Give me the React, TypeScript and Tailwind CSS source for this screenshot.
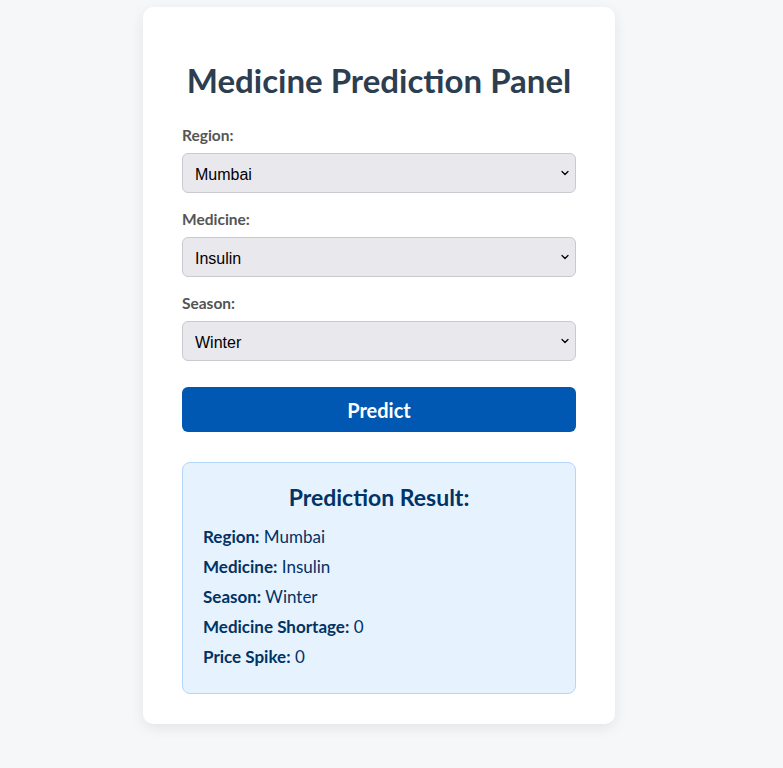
import { ChevronDown } from "lucide-react";

const fields = [
  { label: "Region:", value: "Mumbai", options: ["Mumbai", "Delhi", "Chennai", "Kolkata"] },
  { label: "Medicine:", value: "Insulin", options: ["Insulin", "Paracetamol", "Amoxicillin"] },
  { label: "Season:", value: "Winter", options: ["Winter", "Summer", "Monsoon"] },
];

const results = [
  ["Region:", "Mumbai"],
  ["Medicine:", "Insulin"],
  ["Season:", "Winter"],
  ["Medicine Shortage:", "0"],
  ["Price Spike:", "0"],
];

export default function App() {
  return (
    <div className="min-h-[768px] bg-[#f6f7f9] pt-[7px] pb-10 font-['Lato',sans-serif]">
      <div className="ml-[143px] w-[472px] rounded-[10px] bg-white px-[39px] pt-[30px] pb-[30px] shadow-[0_4px_14px_rgba(0,0,0,0.08)]">
        {/* Header */}
        <h2 className="mt-[24px] text-center text-[33px] leading-[38px] font-bold whitespace-nowrap text-[#2c3e50]">
          Medicine Prediction Panel
        </h2>

        <div className="mt-[26px] flex flex-col gap-4">
          {fields.map(({ label, value, options }) => (
            <div key={label} className="flex flex-col gap-2">
              <label className="text-[15.5px] leading-5 font-bold text-[#555]">{label}</label>
              <div className="relative">
                <select
                  defaultValue={value}
                  className="h-10 w-full appearance-none rounded-[6px] border border-[#c9c9cf] bg-[#e9e9ed] px-3 pt-[3px] font-['Liberation_Sans',sans-serif] text-[16px] text-black outline-none"
                >
                  {options.map((o) => (
                    <option key={o}>{o}</option>
                  ))}
                </select>
                <ChevronDown
                  size={12}
                  strokeWidth={2.5}
                  className="pointer-events-none absolute top-1/2 right-[5px] -translate-y-1/2 text-black"
                />
              </div>
            </div>
          ))}
        </div>

        <button className="mt-[26px] h-[45px] w-full rounded-[6px] bg-[#0058b3] text-[20px] font-bold text-white">
          Predict
        </button>

        {/* Result */}
        <div className="mt-[30px] rounded-[8px] border border-[#b3d6fb] bg-[#e6f2fe] px-5 pt-5 pb-6 text-[#003366]">
          <h3 className="text-center text-[23px] leading-7 font-bold">Prediction Result:</h3>
          <div className="mt-[14px] flex flex-col gap-[6px] text-[17px] leading-6">
            {results.map(([k, v]) => (
              <p key={k}>
                <span className="font-bold">{k}</span> {v}
              </p>
            ))}
          </div>
        </div>
      </div>
    </div>
  );
}
